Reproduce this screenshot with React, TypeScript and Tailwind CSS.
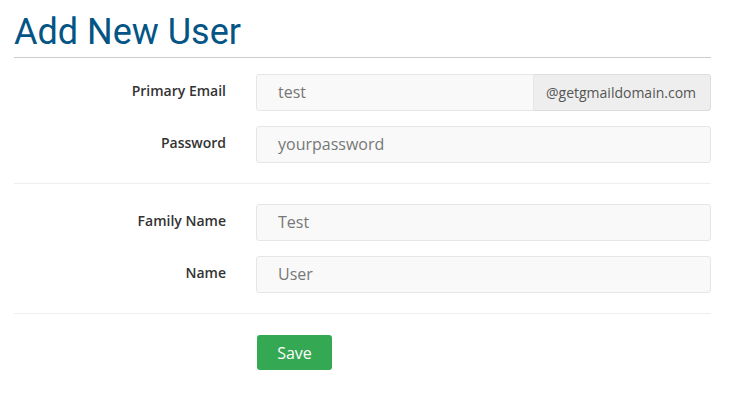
import React from "react";

function Field({ label, value, addon }: { label: string; value: string; addon?: string }) {
  return (
    <div className="flex items-start">
      <label className="w-[212px] shrink-0 pt-[7px] text-right text-[14px] leading-[20px] font-semibold text-[#333]">{label}</label>
      <div className="ml-[30px] flex h-[37px] flex-1">
        <input
          readOnly
          value={value}
          className="h-full min-w-0 flex-1 rounded-l-[3px] border border-[#e6e6e6] bg-[#f9f9f9] pb-[1px] pl-[21px] text-[16px] text-[#777] outline-none"
          style={addon ? {} : { borderRadius: 3 }}
        />
        {addon && (
          <span className="flex h-full w-[177px] items-center rounded-r-[3px] border border-l-0 border-[#ddd] bg-[#eeeeee] pb-[1px] pl-[12px] text-[14px] text-[#555]">
            {addon}
          </span>
        )}
      </div>
    </div>
  );
}

export default function App() {
  return (
    <div className="min-h-screen bg-white font-['Open_Sans',sans-serif]">
      <div className="ml-[14px] w-[697px]">
        <h1 className="pt-[11px] pb-[4px] font-['Roboto',sans-serif] text-[36px] leading-[42px] text-[#035586]">
          Add New User
        </h1>
        <div className="h-px bg-[#cccccc]" />
        <div className="flex flex-col gap-[15px] pt-[16px]">
          <Field label="Primary Email" value="test" addon="@getgmaildomain.com" />
          <Field label="Password" value="yourpassword" />
        </div>
        <div className="mt-[20px] h-px bg-[#eeeeee]" />
        <div className="flex flex-col gap-[15px] pt-[20px]">
          <Field label="Family Name" value="Test" />
          <Field label="Name" value="User" />
        </div>
        <div className="mt-[20px] h-px bg-[#eeeeee]" />
        <div className="pt-[21px] pl-[243px]">
          <button className="h-[35px] w-[75px] rounded-[3px] bg-[#34a853] text-[16px] text-white">Save</button>
        </div>
      </div>
    </div>
  );
}
